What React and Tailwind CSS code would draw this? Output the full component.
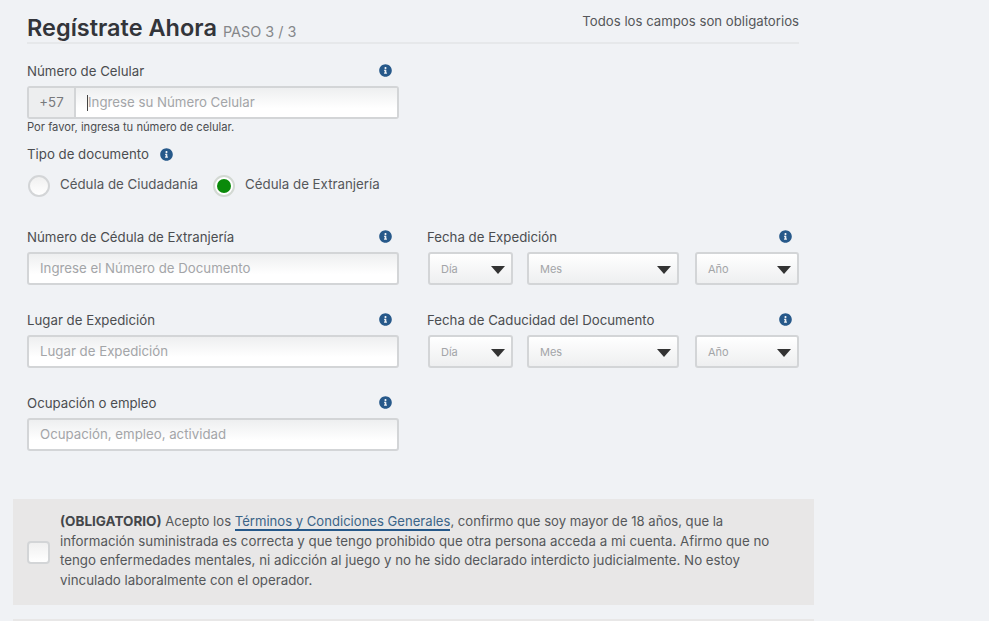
import React from 'react';
import { FaInfoCircle } from 'react-icons/fa';

const inputClass = 'flex h-[33px] w-full items-center rounded-[3px] border-2 border-[#d3d5d7] bg-gradient-to-b from-[#eeeff0] to-white to-70% px-[11px] text-[13.25px] text-[#a3a5a8]';

function Info() {
  return <FaInfoCircle className="mb-[2px] h-[13px] w-[13px] text-[#27598a]" />;
}

function Label({ text }) {
  return (
    <div className="flex h-[17px] items-center justify-between pr-[7px]">
      <span className="text-[13.25px] text-[#4b4d50]">{text}</span>
      <Info />
    </div>
  );
}

function Field({ label, placeholder }) {
  return (
    <div>
      <Label text={label} />
      <div className="mt-[6px]">
        <div className={inputClass}>{placeholder}</div>
      </div>
    </div>
  );
}

function Select({ text, className }) {
  return (
    <div className={`flex h-[33px] items-center justify-between rounded-[3px] border-2 border-[#d3d5d7] bg-gradient-to-b from-white to-[#eeeff0] pl-[11px] pr-[6px] pt-[2px] text-[11px] text-[#a3a5a8] ${className}`}>
      {text}
      <span className="h-0 w-0 border-x-[7.5px] border-t-[8px] border-x-transparent border-t-[#333333]" />
    </div>
  );
}

function FechaField({ label }) {
  return (
    <div>
      <Label text={label} />
      <div className="mt-[6px] flex pl-px">
        <Select text="Día" className="w-[85px]" />
        <Select text="Mes" className="ml-[14px] w-[152px]" />
        <Select text="Año" className="ml-4 w-[104px]" />
      </div>
    </div>
  );
}

export default function App() {
  return (
    <div className="h-[621px] overflow-hidden bg-[#f0f2f5] font-['Inter',sans-serif]">
      <div className="ml-[27px] w-[772px] pt-[14px]">
        <div className="flex h-[30px] items-end justify-between border-b-2 border-[#e6e8ea]">
          <div className="flex items-baseline gap-[6px]">
            <h1 className="text-[23.5px] font-semibold leading-[28px] text-[#33353a]">Regístrate Ahora</h1>
            <span className="translate-y-px text-[14.4px] text-[#85878a]">PASO 3 / 3</span>
          </div>
          <span className="self-start text-[13.2px] leading-[15px] text-[#55575a]">Todos los campos son obligatorios</span>
        </div>

        <div className="mt-[19px] w-[372px]">
          <Label text="Número de Celular" />
          <div className="mt-[6px] flex h-[33px] rounded-[3px] border-2 border-[#d3d5d7]">
            <div className="flex w-[47px] items-center justify-center border-r-2 border-[#d3d5d7] bg-[#edeeef] text-[13.25px] text-[#77797c]">+57</div>
            <div className="flex flex-1 items-center bg-gradient-to-b from-[#eeeff0] to-white to-70% pl-[11px] text-[13.25px] text-[#a3a5a8]">
              <span className="h-[16px] w-px bg-[#444444]" />
              Ingrese su Número Celular
            </div>
          </div>
          <p className="mt-px text-[11.2px] leading-[14px] text-[#4b4d50]">Por favor, ingresa tu número de celular.</p>
        </div>

        <div className="mt-[13px] flex h-[16px] items-center gap-[11px]">
          <span className="text-[13.25px] text-[#4b4d50]">Tipo de documento</span>
          <Info />
        </div>

        <div className="mt-[12px] flex h-[22px] items-center text-[13.3px] text-[#55575a]">
          <span className="ml-px h-[22px] w-[22px] rounded-full border-2 border-[#d3d5d7] bg-gradient-to-b from-[#f0f0f0] to-white" />
          <span className="mb-[3px] ml-[10px]">Cédula de Ciudadanía</span>
          <span className="ml-[15px] flex h-[22px] w-[22px] items-center justify-center rounded-full border-2 border-[#d3d9d3] bg-white">
            <span className="h-[14px] w-[14px] rounded-full bg-[#0a8a0a]" />
          </span>
          <span className="mb-[3px] ml-[10px]">Cédula de Extranjería</span>
        </div>

        <div className="mt-[32px] grid grid-cols-2 gap-x-[28px] gap-y-[27px]">
          <Field label="Número de Cédula de Extranjería" placeholder="Ingrese el Número de Documento" />
          <FechaField label="Fecha de Expedición" />
          <Field label="Lugar de Expedición" placeholder="Lugar de Expedición" />
          <FechaField label="Fecha de Caducidad del Documento" />
          <Field label="Ocupación o empleo" placeholder="Ocupación, empleo, actividad" />
        </div>
      </div>

      <div className="ml-[13px] mt-[48px] flex h-[106px] w-[801px] items-center bg-[#e8e7e7] pl-[14px] pr-[30px]">
        <span className="h-[23px] w-[23px] shrink-0 rounded-[4px] border-2 border-[#d3d5d7] bg-gradient-to-b from-[#f0f0f0] to-white" />
        <div className="mb-[2px] ml-[10px] leading-[19.5px] text-[#55575a]">
          <div className="text-[13.1px]">
            <b className="text-[13.5px] font-bold text-[#44464a]">(OBLIGATORIO)</b> Acepto los <span className="border-b-2 border-[#27598a] text-[#3b6488]">Términos y Condiciones Generales</span>, confirmo que soy mayor de 18 años, que la
          </div>
          <div className="text-[13.3px]">
            información suministrada es correcta y que tengo prohibido que otra persona acceda a mi cuenta. Afirmo que no tengo enfermedades mentales, ni adicción al juego y no he sido declarado interdicto judicialmente. No estoy vinculado laboralmente con el operador.
          </div>
        </div>
      </div>
      <div className="ml-[13px] mt-[14px] h-[2px] w-[801px] bg-[#e8e7e7]" />
    </div>
  );
}
